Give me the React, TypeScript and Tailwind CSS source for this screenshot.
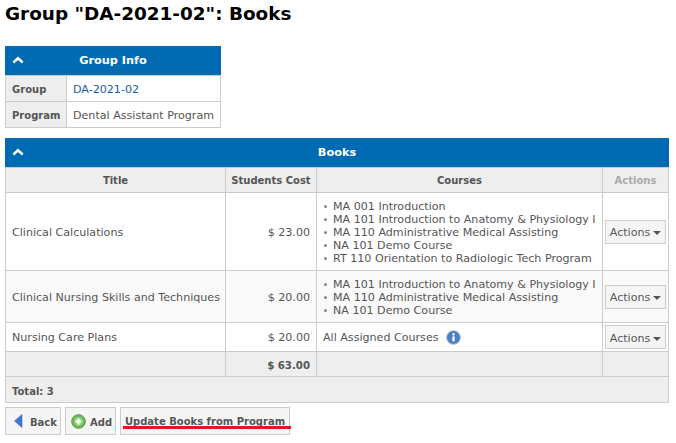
const font = { fontFamily: '"DejaVu Sans", Verdana, sans-serif' }

function Collapse() {
	return (
		<svg viewBox="0 0 12 8" className="h-[8px] w-[12px]" aria-hidden="true">
			<path d="M6 0.5 L11.5 5.5 L9.8 7.5 L6 4 L2.2 7.5 L0.5 5.5 Z" fill="#fff" />
		</svg>
	)
}

function PanelHeader({ title }: { title: string }) {
	return (
		<div className="relative flex h-[29px] items-center justify-center bg-[#006bb3] pt-[2px] text-[11.3px] font-bold text-white">
			<span className="absolute left-[7px] top-[10px]">
				<Collapse />
			</span>
			{title}
		</div>
	)
}

function ActionsButton() {
	return (
		<button className="inline-flex h-[24px] w-[61px] items-center justify-center gap-[3px] border border-[#cccccc] bg-[#f5f5f5] pt-[4px] text-[11.1px] text-[#555555]">
			Actions
			<span className="-mt-[1px] h-0 w-0 border-x-[4px] border-t-[4px] border-x-transparent border-t-[#555555]" />
		</button>
	)
}

function CourseList({ items }: { items: string[] }) {
	return (
		<ul className="leading-[13px]">
			{items.map((c) => (
				<li key={c} className="flex items-center gap-[6px] whitespace-nowrap">
					<span className="ml-[1px] h-[3px] w-[3px] rounded-full bg-[#888888]" />
					{c}
				</li>
			))}
		</ul>
	)
}

const cell = 'border border-[#cccccc] px-[6px] pt-[3px]'
const courseCell = 'border border-[#cccccc] px-[6px] pt-[2px]'
const head = 'border border-[#cccccc] bg-[#eeeeee] pt-[1px] font-bold text-[#555555] text-center text-[10px]'
const label = 'border border-[#cccccc] bg-[#eeeeee] pl-[6px] pt-[2px] text-[10px] font-bold'

export default function App() {
	return (
		<div className="relative h-[443px] w-[676px] overflow-hidden bg-white text-[11.1px] text-[#555555]" style={font}>
			<h1 className="px-[5px] pt-[2px] text-[18.4px] font-bold leading-[24px] text-black">Group "DA-2021-02": Books</h1>

			<div className="ml-[5px] mt-[20px] w-[216px]">
				<PanelHeader title="Group Info" />
				<table className="w-full table-fixed border-collapse">
					<colgroup>
						<col className="w-[61px]" />
						<col />
					</colgroup>
					<tbody>
						<tr className="h-[26px]">
							<td className={label}>Group</td>
							<td className={cell}><a className="text-[#1a5ea8]">DA-2021-02</a></td>
						</tr>
						<tr className="h-[26px]">
							<td className={label}>Program</td>
							<td className={`${cell} whitespace-nowrap`}>Dental Assistant Program</td>
						</tr>
					</tbody>
				</table>
			</div>

			<div className="ml-[5px] mt-[10px] w-[664px]">
				<PanelHeader title="Books" />
				<table className="w-full table-fixed border-collapse">
					<colgroup>
						<col className="w-[220px]" />
						<col className="w-[91px]" />
						<col className="w-[286px]" />
						<col />
					</colgroup>
					<thead>
						<tr className="h-[25px]">
							<th className={head}>Title</th>
							<th className={head}>Students Cost</th>
							<th className={head}>Courses</th>
							<th className={`${head} !text-[#aaaaaa]`}>Actions</th>
						</tr>
					</thead>
					<tbody>
						<tr className="h-[78px]">
							<td className={cell}>Clinical Calculations</td>
							<td className={`${cell} text-right`}>$ 23.00</td>
							<td className={courseCell}>
								<CourseList items={['MA 001 Introduction', 'MA 101 Introduction to Anatomy & Physiology I', 'MA 110 Administrative Medical Assisting', 'NA 101 Demo Course', 'RT 110 Orientation to Radiologic Tech Program']} />
							</td>
							<td className="border border-[#cccccc] text-center"><ActionsButton /></td>
						</tr>
						<tr className="h-[52px] bg-[#f9f9f9]">
							<td className={`${cell} whitespace-nowrap`}>Clinical Nursing Skills and Techniques</td>
							<td className={`${cell} text-right`}>$ 20.00</td>
							<td className={courseCell}>
								<CourseList items={['MA 101 Introduction to Anatomy & Physiology I', 'MA 110 Administrative Medical Assisting', 'NA 101 Demo Course']} />
							</td>
							<td className="border border-[#cccccc] text-center"><ActionsButton /></td>
						</tr>
						<tr className="h-[29px]">
							<td className={cell}>Nursing Care Plans</td>
							<td className={`${cell} text-right`}>$ 20.00</td>
							<td className={cell}>
								<span className="flex items-center gap-[7px]">
									All Assigned Courses
									<svg viewBox="0 0 16 16" className="-mt-[2px] h-[15px] w-[15px]" aria-hidden="true">
										<circle cx="8" cy="8" r="7.3" fill="#4a7fc0" stroke="#9db9dc" strokeWidth="1" />
										<circle cx="8" cy="4.6" r="1.3" fill="#fff" />
										<rect x="6.8" y="6.8" width="2.4" height="5.2" fill="#fff" />
									</svg>
								</span>
							</td>
							<td className="border border-[#cccccc] text-center"><ActionsButton /></td>
						</tr>
						<tr className="h-[25px] bg-[#eeeeee]">
							<td className={cell} />
							<td className={`${cell} text-right text-[10.2px] font-bold`}>$ 63.00</td>
							<td className={cell} />
							<td className={cell} />
						</tr>
						<tr className="h-[26px] bg-[#eeeeee]">
							<td colSpan={4} className={`${cell} text-[10px] font-bold`}>Total: 3</td>
						</tr>
					</tbody>
				</table>
			</div>

			<div className="ml-[5px] mt-[4px] flex gap-[4px] text-[10px] font-bold">
				<button className="flex h-[28px] w-[56px] items-center gap-[7px] border border-[#cccccc] bg-[#f5f5f5] pl-[8px] pt-[2px]">
					<svg viewBox="0 0 9 14" className="-mt-[2px] h-[14px] w-[9px]" aria-hidden="true">
						<path d="M8 0.5 V13.5 L0.5 7 Z" fill="#3f78cf" stroke="#2a5aa8" strokeWidth="0.5" />
					</svg>
					Back
				</button>
				<button className="flex h-[28px] w-[51px] items-center gap-[4px] border border-[#cccccc] bg-[#f5f5f5] pl-[5px] pt-[2px]">
					<svg viewBox="0 0 16 16" className="-mt-[2px] h-[15px] w-[15px]" aria-hidden="true">
						<circle cx="8" cy="8" r="7.3" fill="#6fb85a" stroke="#4e9a3e" strokeWidth="1" />
						<circle cx="8" cy="8" r="4.6" fill="#9ad488" />
						<path d="M8 4.8 V11.2 M4.8 8 H11.2" stroke="#fff" strokeWidth="2" />
					</svg>
					Add
				</button>
				<button className="flex h-[28px] w-[170px] items-center justify-center whitespace-nowrap border border-[#cccccc] bg-[#f5f5f5]">
					Update Books from Program
				</button>
			</div>

			<div className="absolute left-[123px] top-[426px] h-[3px] w-[168px] bg-[#ee1122]" />
		</div>
	)
}
